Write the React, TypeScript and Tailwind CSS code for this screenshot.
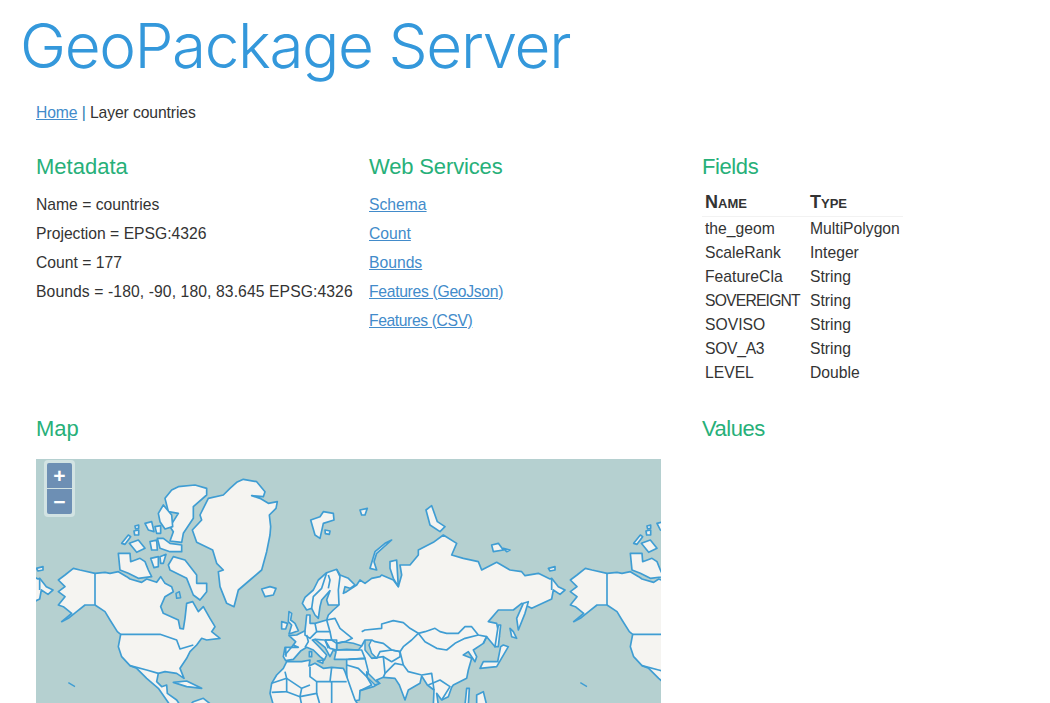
const land = "#f5f4f1";
const water = "#b5d0d0";
const line = "#3f9dd3";

const fields = [
  ["the_geom", "MultiPolygon", ""],
  ["ScaleRank", "Integer", ""],
  ["FeatureCla", "String", ""],
  ["SOVEREIGNT", "String", "tracking-[-0.8px]"],
  ["SOVISO", "String", ""],
  ["SOV_A3", "String", "tracking-[-0.3px]"],
  ["LEVEL", "Double", ""],
];

// coastlines, in the coordinates of the 3x map crop
const shapes = [
  // north america
  "M85 375L105 360L130 340L150 345L195 355L225 352L240 355L265 350L290 365L300 372L335 382L350 372L380 382L392 365L405 385L425 395L430 410L405 425L392 455L400 475L445 495L450 520L460 522L465 490L470 445L488 440L505 470L520 455L540 490L555 515L545 530L570 550L530 555L515 550L500 570L480 590L470 610L450 640L462 670L440 655L405 650L385 655L380 680L395 695L410 690L412 715L440 735L450 750L420 750L385 700L350 670L320 640L300 632L275 605L265 575L272 538L262 530L240 495L225 470L195 450L165 450L140 470L115 490L95 500L125 475L100 455L85 450L105 425L85 410L105 395Z",
  // south america top
  "M480 750L490 740L520 730L545 750Z",
  // greenland
  "M600 100L620 82L640 73L680 80L705 110L700 125L665 122L690 130L715 145L742 140L738 160L718 180L722 215L720 240L710 290L695 345L660 375L625 405L612 455L590 445L570 395L565 350L580 345L560 325L548 285L500 262L487 225L515 195L510 180L535 130L580 120Z",
  // cuba, hispaniola
  "M430 682L470 678L515 700L470 695Z",
  // arctic islands
  "M405 130L425 105L445 95L495 90L530 100L530 120L490 155L490 190L460 235L455 262L420 258L430 230L420 215L445 175L415 170Z",
  "M385 175L400 150L425 180L428 215L405 222L390 200Z",
  "M415 330L430 305L465 315L500 360L500 385L530 385L530 410L510 435L490 420L470 370L420 345Z",
  "M265 295L300 295L302 320L330 310L345 320L355 345L365 365L325 370L295 355L270 345Z",
  "M275 265L295 240L302 245L285 268Z",
  "M298 265L325 255L345 280L320 292Z",
  "M345 205L365 200L372 230L355 225Z",
  "M360 260L380 255L382 285L365 285Z",
  "M382 250L400 250L420 265L455 270L455 290L420 290L390 280Z",
  "M362 310L385 305L385 335L372 338Z",
  "M312 228L326 225L326 240L314 240Z",
  "M315 213L326 210L326 220L317 222Z",
  "M375 215L392 212L392 235L380 235Z",
  "M390 305L408 298L400 325L392 325Z",
  // iceland, svalbard
  "M695 402L720 395L738 400L730 420L705 425Z",
  "M842 195L870 185L880 170L910 175L912 195L880 205L870 250L855 240Z",
  "M885 225L900 228L898 238L886 236Z",
  // britain, ireland
  "M777 470L785 475L782 495L795 505L805 527L777 537L785 510L775 500Z",
  "M755 500L773 505L767 522L755 522Z",
  // eurasia
  "M817 445L825 427L850 405L865 375L890 353L920 343L930 360L955 370L975 390L960 400L945 395L940 415L950 410L980 390L990 375L1005 385L1025 370L1050 365L1055 360L1090 375L1105 395L1115 360L1110 330L1140 330L1165 300L1165 285L1210 262L1240 240L1280 265L1265 300L1300 310L1345 320L1355 345L1400 322L1440 345L1475 350L1485 362L1525 355L1560 372L1565 370L1585 395L1605 405L1590 418L1570 405L1565 432L1505 460L1475 445L1450 465L1405 465L1375 500L1400 505L1408 545L1395 575L1370 545L1360 565L1330 585L1340 605L1335 620L1315 590L1300 600L1325 610L1315 645L1310 670L1270 690L1265 697L1255 725L1235 735L1220 715L1225 750L1210 750L1212 705L1192 690L1175 663L1170 685L1135 705L1125 735L1108 690L1095 670L1060 667L1040 675L1048 685L1030 695L990 707L988 735L970 738L952 690L950 650L950 630L950 613L913 613L918 590L910 585L900 605L885 577L855 553L847 555L865 573L890 600L883 615L870 605L850 585L830 577L813 587L790 613L767 617L760 605L765 577L805 577L790 570L797 560L777 542L800 540L825 527L827 510L830 480L840 480L840 505L855 505L890 495L895 480L910 465L927 450L895 450L890 435L900 407L875 435L870 455L865 490L855 480L845 460L830 465Z",
  // africa
  "M725 685L740 660L760 640L770 620L815 620L840 615L837 633L855 625L880 640L905 637L940 640L945 650L975 735L985 750L730 750L720 715Z",
  // med and asian islands
  "M838 590L845 590L845 605L838 605Z",
  "M862 618L880 615L878 625Z",
  "M1403 620L1412 575L1420 570L1435 575L1400 635L1350 640L1360 620L1395 620Z",
  "M1440 520L1445 545L1460 550L1450 530Z",
  // novaya zemlya, sakhalin, kamchatka
  "M1085 255L1065 265L1035 290L1020 340L1040 345L1032 320L1040 295Z",
  "M1480 445L1495 440L1485 475L1465 525L1460 490Z",
  "M1405 510L1412 510L1405 575L1395 575Z",
  // northern russian islands
  "M1188 165L1205 152L1222 200L1245 215L1230 230L1200 210Z",
  "M1385 270L1405 265L1420 285L1390 290Z",
  "M1420 280L1440 285L1430 290Z",
  "M990 165L1012 160L1005 180L995 180Z",
  "M1080 320L1100 315L1105 395L1090 370L1080 340Z",
  "M1555 340L1575 335L1575 345L1560 348Z",
  // philippines, borneo edge
  "M1310 700L1318 700L1315 750L1305 750Z",
  "M1340 720L1360 710L1370 750L1340 750Z",
];

// inner seas, drawn over the land
const seas = [
  "M920 565L940 560L970 565L995 573L985 585L950 583L920 585Z", // black sea
  "M1005 555L1025 555L1017 570L1025 595L1040 610L1025 610L1005 585Z", // caspian
  "M1010 650L1040 680L1050 685L1035 690L1010 665Z", // persian gulf
  "M438 415L448 410L452 428L440 430Z",
];

// country borders
const borders = [
  "M195 355L195 450",
  "M272 538L390 538L440 555L450 582L490 570",
  "M300 632L350 645L385 655",
  "M1565 372L1565 405",
  // scandinavia and europe
  "M890 353L875 400L850 425L845 460",
  "M895 360L900 375L895 400",
  "M920 343L930 365L925 405L927 450",
  "M890 495L915 490L930 520L967 550L945 560L920 565L905 555",
  "M855 505L860 530L840 550L825 540L825 527",
  "M860 530L900 530L905 555L885 555",
  "M890 495L900 530",
  "M830 540L835 560L825 577",
  "M765 600L790 570",
  "M767 577L768 605",
  "M885 555L920 555L920 585L900 580L885 555",
  "M855 553L885 555L895 580",
  // caucasus, turkey, middle east
  "M913 585L995 585L1005 610L955 613",
  "M950 613L1005 610L1015 650L1010 665",
  "M950 630L985 640L1010 665L1025 690L990 707",
  "M995 573L1005 555",
  // central asia
  "M995 530L1005 525L1055 520L1055 507L1090 497L1120 503L1140 520L1165 535L1145 555L1120 575L1110 590L1085 585L1060 565L1035 560L1025 555",
  "M1165 535L1185 530L1215 520L1230 530L1250 535L1285 535L1305 515L1325 515L1345 540L1370 545L1360 565",
  "M1165 535L1185 560L1220 580L1250 585L1275 565L1305 550L1345 540",
  "M1040 610L1050 590L1085 585L1110 590",
  "M1025 610L1060 605L1065 655L1060 667",
  "M1060 605L1085 620L1110 605L1110 590",
  "M1065 655L1095 625L1120 630L1135 650L1175 660",
  "M1110 590L1120 630",
  "M1175 660L1205 655L1212 705",
  "M1195 690L1230 675L1260 695L1235 735",
  // africa
  "M765 650L770 670L725 685",
  "M770 670L770 710L725 712",
  "M770 670L815 700L840 690",
  "M840 635L840 665L860 680L900 680L905 637",
  "M860 680L860 715L810 725",
  "M900 680L950 680",
  "M905 680L905 750",
  "M770 710L810 725L815 700",
  "M810 725L815 750",
  "M860 715L870 750",
];

const World = ({ shift }: { shift: number }) => (
  <g transform={`translate(${shift} 0)`}>
    {shapes.map((d, i) => (
      <path key={i} d={d} fill={land} stroke={line} strokeWidth={5} strokeLinejoin="round" />
    ))}
    {seas.map((d, i) => (
      <path key={i} d={d} fill={water} stroke={line} strokeWidth={4.5} strokeLinejoin="round" />
    ))}
    {borders.map((d, i) => (
      <path key={i} d={d} fill="none" stroke={line} strokeWidth={5} strokeLinejoin="round" />
    ))}
    <path d="M115 683L135 695" fill="none" stroke={line} strokeWidth={4} />
  </g>
);

const App = () => {
  return (
    <div className="h-[703px] overflow-hidden bg-white text-[#333] font-['Liberation_Sans',Arial,sans-serif] text-[15.7px]">
      <h1 className="pl-[20px] pt-[9px] font-['Inter',sans-serif] text-[62px] font-light leading-[74px] tracking-[-1.4px] text-[#3498db]">
        GeoPackage Server
      </h1>

      <div className="px-9">
        <p className="mt-[18px] leading-[24px] tracking-[-0.1px]">
          <a href="#" className="text-[#428bca] underline">Home</a>{" "}
          <span className="text-[#2a7ab0]">|</span> Layer countries
        </p>

        <div className="mt-[28px] grid w-[999px] grid-cols-3">
          {/* Metadata */}
          <div>
            <h2 className="text-[22px] leading-[28px] text-[#27b079]">Metadata</h2>
            <div className="mt-[9px] flex flex-col">
              <p className="leading-[29px]">Name = countries</p>
              <p className="leading-[29px]">Projection = EPSG:4326</p>
              <p className="leading-[29px]">Count = 177</p>
              <p className="leading-[29px] whitespace-nowrap tracking-[0.1px]">Bounds = -180, -90, 180, 83.645 EPSG:4326</p>
            </div>
          </div>

          {/* Web Services */}
          <div>
            <h2 className="text-[22px] leading-[28px] tracking-[-0.15px] text-[#27b079]">Web Services</h2>
            <div className="mt-[9px] flex flex-col items-start">
              <a href="#" className="leading-[29px] text-[#428bca] underline">Schema</a>
              <a href="#" className="leading-[29px] text-[#428bca] underline">Count</a>
              <a href="#" className="leading-[29px] text-[#428bca] underline">Bounds</a>
              <a href="#" className="leading-[29px] tracking-[-0.3px] text-[#428bca] underline">Features (GeoJson)</a>
              <a href="#" className="leading-[29px] tracking-[-0.4px] text-[#428bca] underline">Features (CSV)</a>
            </div>
          </div>

          {/* Fields */}
          <div>
            <h2 className="text-[22px] leading-[28px] tracking-[-0.4px] text-[#27b079]">Fields</h2>
            <table className="mt-[8px] w-[201px] table-fixed border-collapse text-left">
              <thead>
                <tr className="border-b border-[#f2f2f2]">
                  <th className="h-[27px] w-[108px] pl-[3px] text-[18px] font-bold [font-variant:small-caps]">Name</th>
                  <th className="h-[27px] text-[18px] font-bold [font-variant:small-caps]">Type</th>
                </tr>
              </thead>
              <tbody>
                {fields.map(([name, type, tight]) => (
                  <tr key={name} className="h-[24px]">
                    <td className={`whitespace-nowrap pl-[3px] ${tight}`}>{name}</td>
                    <td className="whitespace-nowrap">{type}</td>
                  </tr>
                ))}
              </tbody>
            </table>
          </div>
        </div>

        <div className="mt-[30px] grid w-[999px] grid-cols-3">
          <div className="col-span-2">
            <h2 className="text-[22px] leading-[28px] text-[#27b079]">Map</h2>
            <div className="relative mt-[16px] h-[244px] w-[625px] overflow-hidden bg-[#b5d0d0]">
              <svg viewBox="18 12 1875 732" className="block h-full w-full">
                <World shift={-1536} />
                <World shift={0} />
                <World shift={1536} />
              </svg>
              {/* zoom control */}
              <div className="absolute left-[8px] top-[1px] flex flex-col gap-[1px] rounded-[4px] bg-white/40 p-[3px]">
                <button className="flex h-[25px] w-[25px] items-center justify-center rounded-t-[2px] bg-[#6d8fb4] text-[21px] font-bold leading-none text-white">+</button>
                <button className="flex h-[25px] w-[25px] items-center justify-center rounded-b-[2px] bg-[#6d8fb4] text-[21px] font-bold leading-none text-white">−</button>
              </div>
            </div>
          </div>
          <div>
            <h2 className="text-[22px] leading-[28px] tracking-[-0.5px] text-[#27b079]">Values</h2>
          </div>
        </div>
      </div>
    </div>
  );
};

export default App;
